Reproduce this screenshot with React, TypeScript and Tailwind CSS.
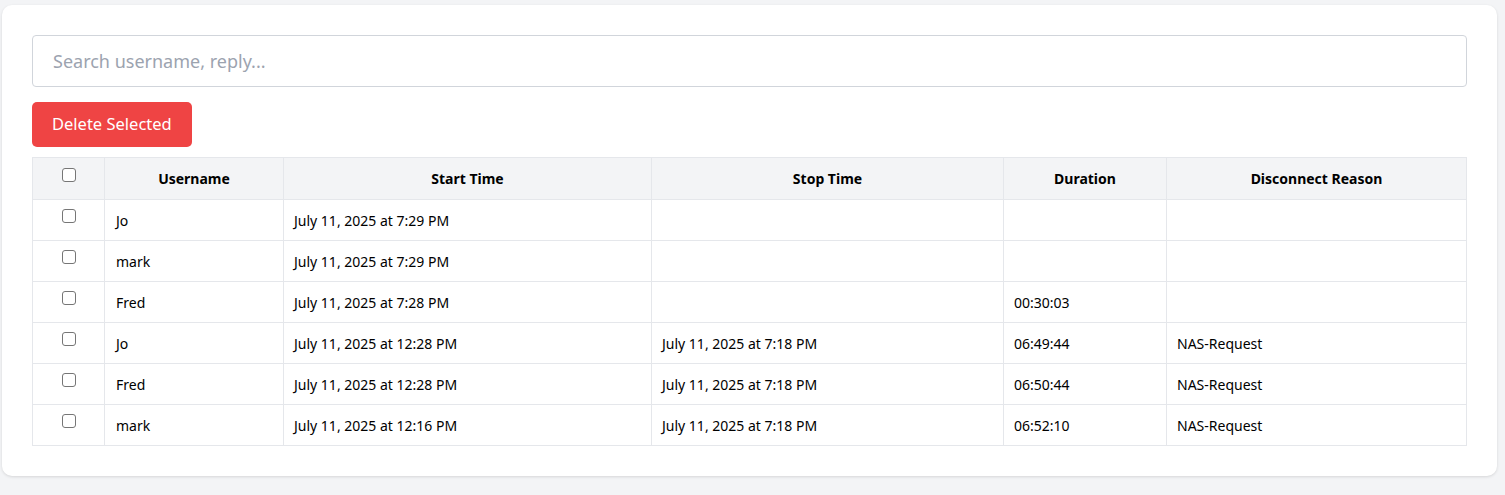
const rows = [
  { user: "Jo", start: "July 11, 2025 at 7:29 PM", stop: "", duration: "", reason: "" },
  { user: "mark", start: "July 11, 2025 at 7:29 PM", stop: "", duration: "", reason: "" },
  { user: "Fred", start: "July 11, 2025 at 7:28 PM", stop: "", duration: "00:30:03", reason: "" },
  { user: "Jo", start: "July 11, 2025 at 12:28 PM", stop: "July 11, 2025 at 7:18 PM", duration: "06:49:44", reason: "NAS-Request" },
  { user: "Fred", start: "July 11, 2025 at 12:28 PM", stop: "July 11, 2025 at 7:18 PM", duration: "06:50:44", reason: "NAS-Request" },
  { user: "mark", start: "July 11, 2025 at 12:16 PM", stop: "July 11, 2025 at 7:18 PM", duration: "06:52:10", reason: "NAS-Request" },
];

function Box() {
  return (
    <span className="block mx-auto w-[14px] h-[14px] rounded-[3px] border border-[#767676] bg-white" />
  );
}

export default function App() {
  return (
    <div className="min-h-[495px] bg-[#f3f4f6] pt-[5px] pl-[2px] font-['Noto_Sans','Open_Sans',sans-serif]">
      <div className="w-[1495px] bg-white rounded-[10px] shadow-[0_1px_3px_rgba(0,0,0,0.12)] p-[30px]">
        <input
          placeholder="Search username, reply..."
          className="block w-full h-[52px] border border-[#d1d5db] rounded-[4px] px-[20px] text-[18px] placeholder:text-[#9ca3af] outline-none"
        />
        <button className="mt-[15px] h-[45px] px-[20px] rounded-[5px] bg-[#ef4444] text-white text-[16.5px]">
          Delete Selected
        </button>
        <table className="mt-[10px] w-full border-collapse table-fixed text-[14px] text-black">
          <thead>
            <tr className="bg-[#f3f4f6] h-[42px]">
              <th className="w-[72px] border border-[#e5e7eb] align-top pt-[10px]">
                <Box />
              </th>
              <th className="w-[179px] border border-[#e5e7eb] font-bold">Username</th>
              <th className="w-[368px] border border-[#e5e7eb] font-bold">Start Time</th>
              <th className="w-[352px] border border-[#e5e7eb] font-bold">Stop Time</th>
              <th className="w-[163px] border border-[#e5e7eb] font-bold">Duration</th>
              <th className="border border-[#e5e7eb] font-bold">Disconnect Reason</th>
            </tr>
          </thead>
          <tbody>
            {rows.map((r, i) => (
              <tr key={i} className="h-[41px]">
                <td className="border border-[#e5e7eb] align-top pt-[9px]">
                  <Box />
                </td>
                <td className="border border-[#e5e7eb] px-[11px]">{r.user}</td>
                <td className="border border-[#e5e7eb] px-[10px]">{r.start}</td>
                <td className="border border-[#e5e7eb] px-[10px]">{r.stop}</td>
                <td className="border border-[#e5e7eb] px-[10px]">{r.duration}</td>
                <td className="border border-[#e5e7eb] px-[10px]">{r.reason}</td>
              </tr>
            ))}
          </tbody>
        </table>
      </div>
    </div>
  );
}
